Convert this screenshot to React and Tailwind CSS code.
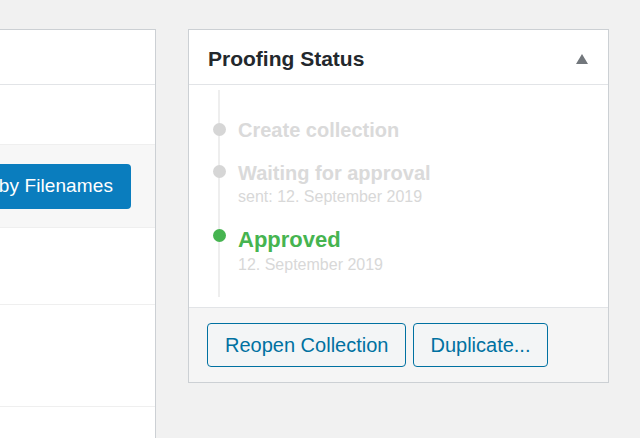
import React from "react";

const font = { fontFamily: '"Liberation Sans", Arial, sans-serif' };

function Item({ dotMt, title, sub }) {
  return (
    <li className="flex items-start">
      <span className={`block -ml-[7px] w-[13px] h-[13px] min-w-[13px] rounded-full shrink-0 bg-[#d6d6d6] ${dotMt}`} />
      <div className="ml-[12px] flex flex-col">
        <span className="text-[20px] leading-[24px] font-bold text-[#dadada]">{title}</span>
        {sub && (
          <span className="text-[16px] leading-[20px] text-[#d8d8d8] mt-[2px]">{sub}</span>
        )}
      </div>
    </li>
  );
}

export default function App() {
  return (
    <div
      style={font}
      className="w-[640px] h-[438px] bg-[#f1f1f1] flex items-start pt-[29px] overflow-hidden"
    >
      {/* Left panel */}
      <div className="w-[156px] h-[409px] shrink-0 bg-white border-t border-r border-[#ccd0d4] flex flex-col overflow-hidden">
        <div className="h-[55px] border-b border-[#e2e4e7]" />
        <div className="h-[59px]" />
        <div className="h-[84px] bg-[#f7f7f7] border-y border-[#efefef] flex items-center justify-end pr-[24px]">
          <button className="shrink-0 whitespace-nowrap h-[45px] pl-[18px] pr-[18px] rounded-[4px] bg-[#0a7dbe] text-white text-[19px] tracking-[0.1px]">
            Sort by Filenames
          </button>
        </div>
        <div className="h-[77px] border-b border-[#efefef]" />
        <div className="h-[102px] border-b border-[#efefef]" />
        <div className="flex-1" />
      </div>

      {/* Right panel */}
      <div className="ml-[32px] w-[421px] shrink-0 bg-white border border-[#ccd0d4]">
        <div className="h-[55px] border-b border-[#e2e4e7] flex items-center justify-between pl-[19px] pr-[20px]">
          <h2 className="text-[21px] leading-[26px] font-bold text-[#23282d] pt-[3px]">
            Proofing Status
          </h2>
          <svg width="12" height="10" viewBox="0 0 12 10" className="mt-[3px]">
            <polygon points="6,0 12,10 0,10" fill="#72777c" />
          </svg>
        </div>

        <div className="pt-[5px] pb-[10px]">
          <ul className="ml-[29px] border-l-2 border-[#eeeeee] pt-[28px] pb-[22px] flex flex-col gap-[19px]">
            <Item dotMt="mt-[5px]" title="Create collection" />
            <Item dotMt="mt-[4px]" title="Waiting for approval" sub="sent: 12. September 2019" />
            <li className="flex items-start mt-[1px]">
              <span className="block -ml-[7px] w-[13px] h-[13px] min-w-[13px] rounded-full shrink-0 bg-[#46b450] mt-[2px]" />
              <div className="ml-[12px] flex flex-col">
                <span className="text-[22px] leading-[26px] font-bold text-[#46b450]">Approved</span>
                <span className="text-[16px] leading-[20px] text-[#d8d8d8] mt-[2px]">12. September 2019</span>
              </div>
            </li>
          </ul>
        </div>

        <div className="border-t border-[#e2e4e7] bg-[#f5f5f5] px-[18px] py-[15px] flex gap-[7px]">
          <button className="h-[44px] px-[17px] rounded-[4px] border border-[#0071a1] bg-[#f3f5f6] text-[#0071a1] text-[20px] whitespace-nowrap">
            Reopen Collection
          </button>
          <button className="h-[44px] px-[16px] rounded-[4px] border border-[#0071a1] bg-[#f3f5f6] text-[#0071a1] text-[20px] whitespace-nowrap">
            Duplicate...
          </button>
        </div>
      </div>
    </div>
  );
}
